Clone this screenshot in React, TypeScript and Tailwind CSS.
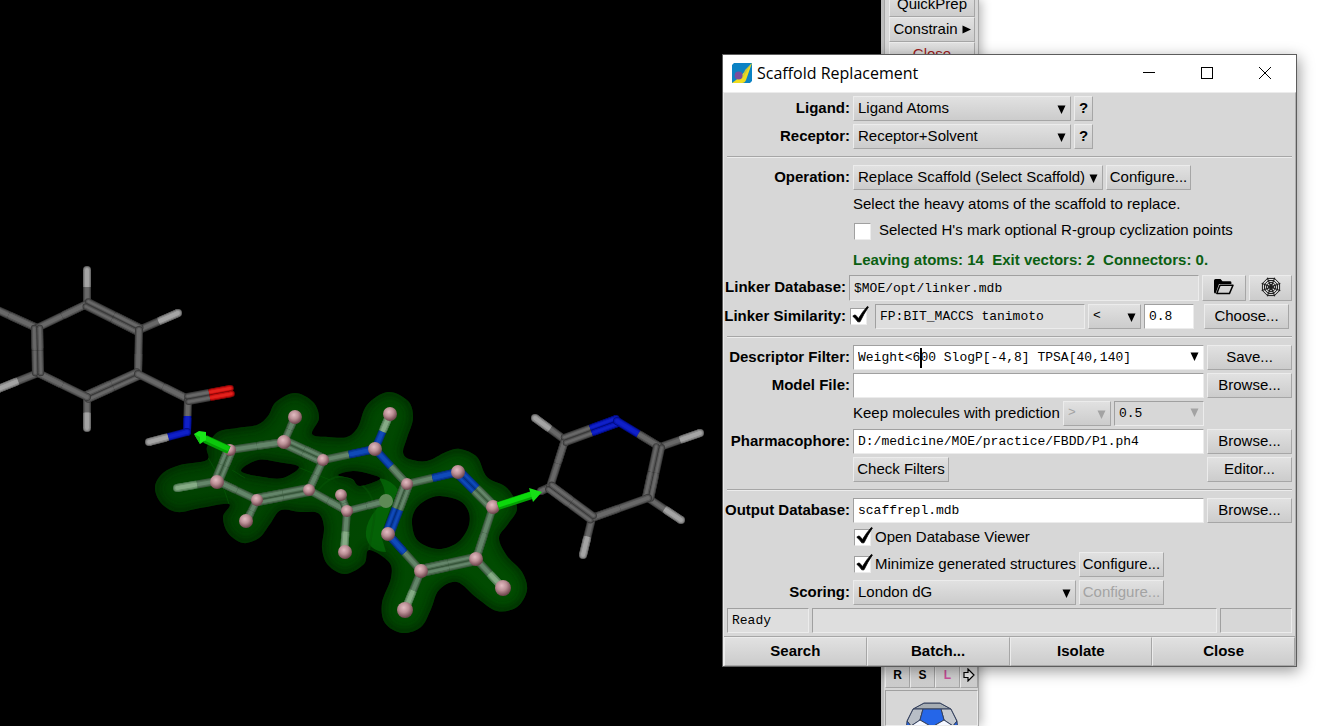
import React from "react";

type Pt = [number, number];

/* ---------- molecule scene ---------- */

type Tone = { edge: string; mid: string; shine: string };

const TONES: Record<string, Tone> = {
  C: { edge: "#3a3a3a", mid: "#545454", shine: "#686868" },
  H: { edge: "#666666", mid: "#8a8a8a", shine: "#a4a4a4" },
  N: { edge: "#030c84", mid: "#0818b4", shine: "#1020c8" },
  O: { edge: "#8a0808", mid: "#c81010", shine: "#e2221c" },
  c: { edge: "#36553a", mid: "#4d6c50", shine: "#64856a" },
  h: { edge: "#4c7650", mid: "#6b936c", shine: "#86ab86" },
  n: { edge: "#052e7c", mid: "#083ca0", shine: "#104ab8" },
};

type BondSpec = { a: Pt; b: Pt; ta: string; tb: string; double?: boolean };

function Bond({ a, b, ta, tb, double }: BondSpec) {
  const len = Math.hypot(b[0] - a[0], b[1] - a[1]);
  const nx = -(b[1] - a[1]) / len;
  const ny = (b[0] - a[0]) / len;
  const offsets = double ? [-2.8, 2.8] : [0];
  const width = double ? 6.5 : 8;
  const layers: [keyof Tone, number][] = [
    ["edge", width],
    ["mid", width - 1.8],
    ["shine", width - 4.2],
  ];
  return (
    <g>
      {offsets.map((o) => {
        const p: Pt = [a[0] + nx * o, a[1] + ny * o];
        const q: Pt = [b[0] + nx * o, b[1] + ny * o];
        const m: Pt = [(p[0] + q[0]) / 2, (p[1] + q[1]) / 2];
        const half = `M${m[0]} ${m[1]}L${q[0]} ${q[1]}`;
        const inset: Pt = [m[0] + ((q[0] - p[0]) / len) * 2, m[1] + ((q[1] - p[1]) / len) * 2];
        return (
          <g key={o} fill="none">
            {layers.map(([k, w]) => (
              <g key={k} stroke={TONES[ta][k]} strokeWidth={w}>
                <path d={`M${p[0]} ${p[1]}L${m[0]} ${m[1]}`} />
                <path d={`M${p[0]} ${p[1]}h0.01`} strokeLinecap="round" />
              </g>
            ))}
            {layers.map(([k, w]) => (
              <g key={k} stroke={TONES[tb][k]} strokeWidth={w}>
                <path d={half} />
                <path d={`M${inset[0]} ${inset[1]}L${q[0]} ${q[1]}`} />
                <path d={`M${q[0]} ${q[1]}h0.01`} strokeLinecap="round" />
              </g>
            ))}
          </g>
        );
      })}
    </g>
  );
}

const bond = (a: Pt, b: Pt, ta: string, tb: string, double = false): BondSpec => ({ a, b, ta, tb, double });

const OUTER_BONDS: BondSpec[] = [
  bond([-20, 302], [37, 328], "C", "C"),
  bond([38, 373], [-2, 389], "C", "H"),
  bond([87, 304], [87, 270], "C", "H"),
  bond([139, 330], [178, 313], "C", "H"),
  bond([87, 397], [87, 428], "C", "H"),
  bond([37, 328], [87, 304], "C", "C"),
  bond([87, 304], [139, 330], "C", "C", true),
  bond([139, 330], [138, 374], "C", "C"),
  bond([138, 374], [87, 397], "C", "C", true),
  bond([87, 397], [38, 373], "C", "C"),
  bond([38, 373], [37, 328], "C", "C", true),
  bond([138, 374], [188, 399], "C", "C"),
  bond([188, 400], [187, 432], "C", "N"),
  bond([188, 399], [231, 391], "C", "O", true),
  bond([187, 432], [149, 442], "N", "H"),
  bond([565, 440], [535, 418], "C", "H"),
  bond([660, 447], [700, 433], "C", "H"),
  bond([648, 498], [681, 520], "C", "H"),
  bond([592, 518], [583, 555], "C", "H"),
  bond([541, 491], [550, 487], "C", "C"),
  bond([550, 487], [565, 440], "C", "C"),
  bond([565, 440], [617, 421], "C", "N", true),
  bond([617, 421], [660, 447], "N", "C"),
  bond([659, 447], [648, 498], "C", "C", true),
  bond([648, 498], [592, 518], "C", "C"),
  bond([592, 518], [550, 487], "C", "C", true),
];

const SCAFFOLD_BONDS: BondSpec[] = [
  bond([217, 481], [177, 488], "c", "h"),
  bond([284, 442], [295, 417], "c", "c"),
  bond([257, 500], [246, 522], "c", "c"),
  bond([230, 450], [284, 442], "c", "c"),
  bond([284, 442], [323, 460], "c", "c", true),
  bond([323, 460], [309, 490], "c", "c"),
  bond([309, 490], [257, 500], "c", "c", true),
  bond([257, 500], [217, 481], "c", "c"),
  bond([217, 481], [230, 450], "c", "c", true),
  bond([309, 490], [347, 511], "c", "c"),
  bond([347, 511], [341, 495], "c", "c"),
  bond([347, 511], [386, 501], "c", "c"),
  bond([347, 511], [344, 552], "c", "h"),
  bond([323, 460], [375, 449], "c", "n"),
  bond([375, 449], [390, 414], "n", "h"),
  bond([375, 449], [407, 484], "n", "c"),
  bond([407, 484], [458, 472], "c", "n"),
  bond([458, 472], [493, 507], "n", "c", true),
  bond([493, 507], [476, 559], "c", "c"),
  bond([476, 559], [421, 571], "c", "c", true),
  bond([421, 571], [388, 534], "c", "n"),
  bond([388, 534], [407, 484], "n", "c", true),
  bond([476, 559], [503, 588], "c", "h"),
  bond([421, 571], [405, 610], "c", "h"),
];

const BALLS: [number, number, number][] = [
  [230, 450, 6], [284, 442, 7], [323, 460, 6], [309, 490, 6], [257, 500, 6], [217, 482, 7],
  [295, 417, 7], [246, 521, 7], [341, 495, 6], [347, 511, 6], [345, 552, 7],
  [375, 449, 7], [390, 414, 7], [407, 484, 6], [458, 472, 7], [493, 507, 7],
  [476, 559, 7], [421, 571, 7], [388, 534, 7], [503, 588, 8], [405, 610, 8],
];

const SURFACE: Pt[] = [
  [207, 447], [218, 432], [237, 428], [257, 425], [268, 416], [276, 402], [295, 393], [313, 402], [319, 418],
  [312, 434], [328, 437], [347, 437], [358, 427], [367, 405], [388, 392], [408, 401], [413, 418], [407, 438],
  [403, 452], [409, 459], [427, 461], [446, 452], [460, 449], [477, 457], [487, 477], [507, 488], [517, 508],
  [508, 524], [499, 538], [507, 556], [522, 572], [527, 590], [517, 607], [497, 611], [477, 598], [457, 582],
  [439, 590], [431, 609], [421, 627], [402, 633], [385, 623], [382, 603], [391, 578], [389, 562], [369, 550],
  [364, 564], [345, 574], [328, 565], [322, 548], [324, 527], [318, 513], [300, 512], [281, 510], [270, 524],
  [259, 538], [243, 543], [228, 533], [223, 517], [229, 504], [200, 508], [177, 512], [161, 503], [155, 487],
  [163, 473], [180, 465], [207, 460],
];

const HOLES: Pt[][] = [
  [[241, 471], [258, 460], [278, 462], [299, 467], [283, 478], [263, 477]],
  [[338, 475], [353, 471], [370, 474], [380, 479], [360, 486], [352, 479]],
  [[440, 496], [460, 501], [469, 513], [468, 528], [457, 543], [438, 549], [418, 541], [412, 524], [415, 510], [426, 500]],
];

function closedCurve(pts: Pt[]): string {
  const n = pts.length;
  let d = `M${pts[0][0]} ${pts[0][1]}`;
  for (let i = 0; i < n; i++) {
    const p0 = pts[(i + n - 1) % n];
    const p1 = pts[i];
    const p2 = pts[(i + 1) % n];
    const p3 = pts[(i + 2) % n];
    d += `C${p1[0] + (p2[0] - p0[0]) / 6} ${p1[1] + (p2[1] - p0[1]) / 6} ${p2[0] - (p3[0] - p1[0]) / 6} ${
      p2[1] - (p3[1] - p1[1]) / 6
    } ${p2[0]} ${p2[1]}`;
  }
  return d + "Z";
}

const SURFACE_PATH = [SURFACE, ...HOLES].map(closedCurve).join("");

function Scene() {
  return (
    <svg
      viewBox="0 0 881 726"
      preserveAspectRatio="xMinYMin slice"
      className="block h-full w-full"
      role="img"
      aria-label="Ligand structure"
    >
      <defs>
        <clipPath id="surface-clip">
          <path d={SURFACE_PATH} clipRule="evenodd" />
        </clipPath>
        <filter id="soft" x="-10%" y="-10%" width="120%" height="120%">
          <feGaussianBlur stdDeviation="4" />
        </filter>
        <linearGradient id="surface-fill" gradientUnits="userSpaceOnUse" x1="155" y1="0" x2="520" y2="0">
          <stop offset="0" stopColor="#014001" />
          <stop offset="1" stopColor="#014c01" />
        </linearGradient>
        <radialGradient id="ball" cx="42%" cy="35%" r="62%">
          <stop offset="0" stopColor="#e3bcc2" />
          <stop offset="0.5" stopColor="#bb9096" />
          <stop offset="1" stopColor="#70484f" />
        </radialGradient>
      </defs>

      {OUTER_BONDS.map((b, i) => (
        <Bond key={i} {...b} />
      ))}

      <path d={SURFACE_PATH} fillRule="evenodd" fill="url(#surface-fill)" />
      <g clipPath="url(#surface-clip)">
        <path d={SURFACE_PATH} fill="none" stroke="#002400" strokeWidth="8" opacity="0.75" filter="url(#soft)" />
        <path
          d="M379 478Q392 480 398 490Q389 510 381 535L386 552Q372 552 367 540Q362 526 378 507Q391 497 379 478Z"
          fill="#056d08"
          opacity="0.7"
        />
        <path d="M318 490Q337 467 359 483Q377 495 374 520L369 550" fill="none" stroke="#065406" strokeWidth="2" opacity="0.5" />
        <path d="M300 468L330 480M229 504Q222 480 207 456M245 478L232 470" stroke="#056005" strokeWidth="1" fill="none" opacity="0.5" />
      </g>

      {SCAFFOLD_BONDS.map((b, i) => (
        <Bond key={i} {...b} />
      ))}
      <circle cx="386" cy="501" r="7" fill="#5f8a56" />
      {BALLS.map(([x, y, r]) => (
        <circle key={`${x}-${y}`} cx={x} cy={y} r={r} fill="url(#ball)" />
      ))}

      <g>
        <line x1="229" y1="450" x2="205" y2="439" stroke="#04a004" strokeWidth="8" />
        <line x1="229" y1="449" x2="205" y2="438" stroke="#0cc80c" strokeWidth="5" />
        <polygon points="194,434 199,431 206,432 206,440 200,444" fill="#19e619" />
        <polygon points="194,434 200,437 200,444" fill="#12c412" />
        <line x1="498" y1="506" x2="532" y2="495" stroke="#04a004" strokeWidth="8" />
        <line x1="498" y1="505" x2="532" y2="494" stroke="#0cd80c" strokeWidth="5" />
        <polygon points="529,488 542,492 533,502" fill="#16e016" />
      </g>
    </svg>
  );
}

/* ---------- form parts ---------- */

const RAISED =
  "border border-t-[#ececec] border-l-[#ececec] border-r-[#a6a6a6] border-b-[#a6a6a6] bg-linear-to-b from-[#e1e1e1] to-[#cccccc]";
const SUNKEN = "border border-t-[#a0a0a0] border-l-[#a0a0a0] border-r-[#ececec] border-b-[#ececec]";
const MONO = "font-['Liberation_Mono',monospace] text-[13px]";

function Triangle({ className = "" }: { className?: string }) {
  return (
    <svg viewBox="0 0 9 9" className={`size-[9px] ${className}`} aria-hidden="true">
      <path d="M0.5 0.5H8.5L4.5 9Z" fill="currentColor" />
    </svg>
  );
}

function Push({
  children,
  className = "w-[85px]",
  disabled,
  label,
}: {
  children: React.ReactNode;
  className?: string;
  disabled?: boolean;
  label?: string;
}) {
  return (
    <button
      type="button"
      disabled={disabled}
      aria-label={label}
      className={`flex h-full shrink-0 items-center justify-center pb-0.5 whitespace-nowrap disabled:text-[#a3a3a3] ${RAISED} ${className}`}
    >
      {children}
    </button>
  );
}

function Choice({
  id,
  label,
  options,
  className,
  mono,
  disabled,
}: {
  id: string;
  label?: string;
  options: string[];
  className: string;
  mono?: boolean;
  disabled?: boolean;
}) {
  return (
    <div className={`relative h-full shrink-0 ${disabled ? "text-[#a3a3a3]" : ""} ${className}`}>
      <select
        id={id}
        aria-label={label}
        disabled={disabled}
        className={`block h-full w-full appearance-none pb-0.5 pl-1 opacity-100 outline-none ${RAISED} ${mono ? MONO : ""}`}
      >
        {options.map((o) => (
          <option key={o}>{o}</option>
        ))}
      </select>
      <Triangle className="pointer-events-none absolute top-[9px] right-[5px]" />
    </div>
  );
}

function Field({
  id,
  value,
  readOnly,
  className = "min-w-0 flex-1",
  label,
}: {
  id: string;
  value: string;
  readOnly?: boolean;
  className?: string;
  label?: string;
}) {
  return (
    <input
      id={id}
      aria-label={label}
      defaultValue={value}
      readOnly={readOnly}
      className={`h-full px-1 outline-none ${SUNKEN} ${MONO} ${readOnly ? "bg-[#dedede]" : "bg-white"} ${className}`}
    />
  );
}

function Tick({ id, checked, label }: { id: string; checked?: boolean; label?: string }) {
  return (
    <span className="relative mx-px block size-[17px] shrink-0">
      <input
        id={id}
        type="checkbox"
        aria-label={label}
        defaultChecked={checked}
        className={`peer block size-full appearance-none bg-white ${SUNKEN}`}
      />
      <svg
        viewBox="0 0 20 20"
        className="pointer-events-none absolute bottom-0 left-0 hidden size-5 peer-checked:block"
        aria-hidden="true"
      >
        <path
          d="M2.8 11.2Q4.6 9.4 6 10.4L8.4 13.6Q12.5 6.6 17.4 1.4L18.4 2Q13.6 9 10 16.8H7.8Q5.6 13.4 2.8 11.2Z"
          fill="#000"
          stroke="#000"
          strokeWidth="0.8"
          strokeLinejoin="round"
        />
      </svg>
    </span>
  );
}

function Row({
  label,
  htmlFor,
  children,
  height = "h-[25px]",
  labelWidth = "w-[123px]",
}: {
  label?: string;
  htmlFor?: string;
  children: React.ReactNode;
  height?: string;
  labelWidth?: string;
}) {
  return (
    <div className={`flex items-center gap-[3px] ${height}`}>
      {label ? (
        <label htmlFor={htmlFor} className={`flex shrink-0 justify-end pb-0.5 font-bold whitespace-nowrap ${labelWidth}`}>
          {label}
        </label>
      ) : (
        <span className={`shrink-0 ${labelWidth}`} />
      )}
      {children}
    </div>
  );
}

function Rule() {
  return <hr className="my-1 h-0.5 border-0 border-t border-b border-t-[#a6a6a6] border-b-[#ececec]" />;
}

function FolderIcon() {
  return (
    <svg viewBox="0 0 20 16" className="h-4 w-5" aria-hidden="true">
      <path d="M0 1.5Q0 0 1.5 0H6.5L8.5 2.2H16Q17.4 2.2 17.4 3.6V5H5L1.6 14.5Q0 14.5 0 13Z" fill="#000" />
      <path d="M6 6.2H19L15.4 14.6H2.8Z" fill="none" stroke="#000" strokeWidth="1.5" strokeLinejoin="round" />
    </svg>
  );
}

function WebIcon() {
  const angles = Array.from({ length: 8 }, (_, i) => ((i + 0.5) * Math.PI) / 4);
  const ring = (r: number) => angles.map((a) => `${10 + r * Math.cos(a)},${10 + r * Math.sin(a)}`).join(" ");
  return (
    <svg viewBox="0 0 20 20" className="size-5" fill="none" stroke="#1c1c1c" aria-hidden="true">
      {[9.3, 7, 4.8, 2.6].map((r) => (
        <polygon key={r} points={ring(r)} strokeWidth="1" />
      ))}
      {angles.map((a) => (
        <line key={a} x1="10" y1="10" x2={10 + 10 * Math.cos(a)} y2={10 + 10 * Math.sin(a)} strokeWidth="1.1" />
      ))}
    </svg>
  );
}

function AppIcon() {
  return (
    <svg viewBox="0 0 20 20" className="size-5" aria-hidden="true">
      <path d="M2 0H20V18L18 20H0V2Z" fill="#0b82c4" />
      <path d="M20 0L14 17Q13 20 10 20H0L8 14Z" fill="#f0dc1e" />
      <path d="M20 0L13 7L10 16Z" fill="#c8c83c" />
      <circle cx="6.6" cy="12.6" r="4" fill="#7a4d9c" />
    </svg>
  );
}

function TitleBar() {
  return (
    <header className="flex h-[37px] items-center bg-white pr-0.5 pb-0.5 pl-[9px]">
      <AppIcon />
      <h1 className="ml-[5px] flex-1 font-['Open_Sans','Noto_Sans',sans-serif] text-base">Scaffold Replacement</h1>
      <button type="button" aria-label="Minimize" className="flex h-full w-[58px] items-center justify-center">
        <svg viewBox="0 0 12 12" className="size-3" shapeRendering="crispEdges">
          <path d="M0 5.5H12" stroke="#000" />
        </svg>
      </button>
      <button type="button" aria-label="Maximize" className="flex h-full w-[58px] items-center justify-center">
        <svg viewBox="0 0 12 12" className="size-3" shapeRendering="crispEdges">
          <path d="M0.5 0.5H11.5V11.5H0.5Z" stroke="#000" fill="none" />
        </svg>
      </button>
      <button type="button" aria-label="Close window" className="flex h-full w-[58px] items-center justify-center">
        <svg viewBox="0 0 12 12" className="size-3">
          <path d="M0 0L12 12M12 0L0 12" stroke="#000" />
        </svg>
      </button>
    </header>
  );
}

function ScaffoldDialog() {
  return (
    <section className="absolute top-[54px] right-[27px] w-[575px] border border-[#5c5c5c] bg-[#d7d7d7] text-[15px] leading-5 text-black shadow-[2px_4px_14px_rgba(0,0,0,0.4)]">
      <TitleBar />
      <form className="border border-t-[#ececec] border-r-[#b0b0b0] border-b-0 border-l-[#ececec]">
        <div className="flex flex-col gap-[3px] p-[3px]">
          <Row label="Ligand:" htmlFor="ligand">
            <Choice id="ligand" options={["Ligand Atoms"]} className="w-[218px]" />
            <Push className="w-[19px] font-bold" label="About ligand">?</Push>
          </Row>
          <Row label="Receptor:" htmlFor="receptor">
            <Choice id="receptor" options={["Receptor+Solvent"]} className="w-[218px]" />
            <Push className="w-[19px] font-bold" label="About receptor">?</Push>
          </Row>
          <Rule />
          <Row label="Operation:" htmlFor="operation">
            <Choice id="operation" options={["Replace Scaffold (Select Scaffold)"]} className="w-[250px]" />
            <Push>Configure...</Push>
          </Row>
          <Row height="h-[22px]">
            <p>Select the heavy atoms of the scaffold to replace.</p>
          </Row>
          <Row height="h-[26px]">
            <Tick id="cyclize" />
            <label htmlFor="cyclize" className="ml-1 pb-0.5">
              Selected H's mark optional R-group cyclization points
            </label>
          </Row>
          <Row>
            <p className="font-bold whitespace-pre text-[#0b5f12]">
              {"Leaving atoms: 14  Exit vectors: 2  Connectors: 0."}
            </p>
          </Row>
          <Row label="Linker Database:" htmlFor="linker-db" height="h-[26px]" labelWidth="w-[119px]">
            <Field id="linker-db" value="$MOE/opt/linker.mdb" readOnly />
            <Push className="w-[44px]" label="Open file">
              <FolderIcon />
            </Push>
            <Push className="w-[43px]" label="Web search">
              <WebIcon />
            </Push>
          </Row>
          <Row label="Linker Similarity:" htmlFor="similarity" labelWidth="w-[119px]">
            <Tick id="similarity" checked />
            <Field id="fingerprint" label="Fingerprint" value="FP:BIT_MACCS tanimoto" readOnly className="ml-1 min-w-0 flex-1" />
            <Choice id="comparison" label="Comparison" options={["<"]} className="w-[53px]" mono />
            <Field id="threshold" label="Threshold" value="0.8" className="w-[50px]" />
            <Push className="mr-[3px] ml-[7px] w-[85px]">Choose...</Push>
          </Row>
          <Rule />
          <Row label="Descriptor Filter:" htmlFor="filter">
            <div className={`relative h-full min-w-0 flex-1 ${MONO}`}>
              <input
                id="filter"
                defaultValue="Weight<600 SlogP[-4,8] TPSA[40,140]"
                className={`block h-full w-full bg-white px-1 outline-none ${SUNKEN}`}
              />
              <span className="absolute top-[3px] left-[calc(5px+8ch)] h-5 w-0.5 bg-black" />
              <Triangle className="pointer-events-none absolute top-[7px] right-[5px]" />
            </div>
            <Push>Save...</Push>
          </Row>
          <Row label="Model File:" htmlFor="model">
            <Field id="model" value="" />
            <Push>Browse...</Push>
          </Row>
          <Row>
            <p className="flex-1 pb-0.5 whitespace-nowrap">Keep molecules with prediction</p>
            <Choice id="prediction" label="Prediction comparison" options={[">"]} className="w-12" mono disabled />
            <div className="relative mr-[88px] h-full w-[90px] shrink-0">
              <input
                aria-label="Prediction threshold"
                defaultValue="0.5"
                readOnly
                className={`block h-full w-full px-1 outline-none ${SUNKEN} ${MONO}`}
              />
              <Triangle className="pointer-events-none absolute top-[7px] right-[5px] text-[#a3a3a3]" />
            </div>
          </Row>
          <Row label="Pharmacophore:" htmlFor="pharmacophore">
            <Field id="pharmacophore" value="D:/medicine/MOE/practice/FBDD/P1.ph4" />
            <Push>Browse...</Push>
          </Row>
          <Row>
            <Push className="mr-auto w-[96px]">Check Filters</Push>
            <Push>Editor...</Push>
          </Row>
          <Rule />
          <Row label="Output Database:" htmlFor="output">
            <Field id="output" value="scaffrepl.mdb" />
            <Push>Browse...</Push>
          </Row>
          <Row height="h-[23px]">
            <Tick id="viewer" checked />
            <label htmlFor="viewer" className="pb-0.5">
              Open Database Viewer
            </label>
          </Row>
          <Row>
            <Tick id="minimize" checked />
            <label htmlFor="minimize" className="pb-0.5">
              Minimize generated structures
            </label>
            <Push>Configure...</Push>
          </Row>
          <Row label="Scoring:" htmlFor="scoring">
            <Choice id="scoring" options={["London dG"]} className="w-[223px]" />
            <Push disabled>Configure...</Push>
          </Row>
          <div className="flex h-[25px] gap-[3px]">
            <output className={`flex w-[82px] items-center bg-[#dedede] px-1 ${SUNKEN} ${MONO}`}>Ready</output>
            <div className={`flex-1 bg-[#dedede] ${SUNKEN}`} />
            <div className={`w-[72px] ${SUNKEN}`} />
          </div>
        </div>
        <div className="grid h-[30px] grid-cols-4 border-t border-t-[#a6a6a6] font-bold">
          {["Search", "Batch...", "Isolate", "Close"].map((name) => (
            <Push key={name} className="w-full">
              {name}
            </Push>
          ))}
        </div>
      </form>
    </section>
  );
}

/* ---------- side toolbar ---------- */

function SoccerBall() {
  return (
    <svg viewBox="0 0 54 54" className="block size-[54px] shrink-0" role="img" aria-label="Builder">
      <defs>
        <clipPath id="ball-clip">
          <path d="M19 1H35L46 7L52 19L53 30L45 46L27 53L9 46L1 30L2 19L8 7Z" />
        </clipPath>
      </defs>
      <g clipPath="url(#ball-clip)" stroke="#34405c" strokeWidth="1">
        <rect width="54" height="54" fill="#fff" />
        <path d="M8 7L19 1H35L46 7L36 7L18 7Z" fill="#a6adb3" />
        <path d="M8 7L18 7L15 18L6 24L2 19Z" fill="#b8bec6" />
        <path d="M46 7L36 7L39 18L48 24L52 19Z" fill="#c6cad0" />
        <path d="M18 7H36L39 18L27 25L15 18Z" fill="#2566e8" />
        <path d="M0 12L6 9L2 19L6 24L3 36L0 36Z" fill="#2566e8" />
        <path d="M54 12L48 9L52 19L48 24L51 36L54 36Z" fill="#2566e8" />
        <path d="M6 24L15 18L27 25V34L18 40L8 36Z" fill="#f4f7ff" />
        <path d="M48 24L39 18L27 25V34L36 40L46 36Z" fill="#f4f7ff" />
      </g>
      <path d="M19 1H35L46 7L52 19L53 30L45 46L27 53L9 46L1 30L2 19L8 7Z" fill="none" stroke="#34405c" strokeWidth="1" />
    </svg>
  );
}

function SideBar() {
  const item = `flex h-[25px] items-center justify-center whitespace-nowrap ${RAISED}`;
  return (
    <aside className="flex min-h-0 flex-col justify-between overflow-hidden border-r border-l-[3px] border-r-[#a6a6a6] border-l-[#bdbdbd] bg-[#d7d7d7] text-[15px] shadow-[2px_0_10px_rgba(0,0,0,0.3)]">
      <nav className="-mt-2 flex flex-col border-l border-l-[#a6a6a6] pr-[3px] pl-1">
        <button type="button" className={item}>QuickPrep</button>
        <button type="button" className={`gap-1 ${item}`}>
          Constrain
          <Triangle className="-rotate-90" />
        </button>
        <button type="button" className={`text-[#9c1c1c] ${item}`}>Close</button>
      </nav>
      <div className="pl-px">
        <div className="grid h-6 grid-cols-[repeat(3,25px)_1fr] text-xs font-bold">
          <Push className="w-full">R</Push>
          <Push className="w-full">S</Push>
          <Push className="w-full text-[#d050a0]">L</Push>
          <Push className="w-full" label="Next">
            <svg viewBox="0 0 12 14" className="h-3.5 w-3" aria-hidden="true">
              <path d="M1 4.5H5V1L11 7L5 13V9.5H1Z" fill="#eee" stroke="#000" strokeWidth="1.2" />
            </svg>
          </Push>
        </div>
        <div className={`mt-0.5 flex h-9 items-start justify-center overflow-hidden pt-[11px] ${SUNKEN}`}>
          <SoccerBall />
        </div>
      </div>
    </aside>
  );
}

export default function App() {
  return (
    <main className="relative grid h-screen grid-cols-[minmax(0,1fr)_98px_345px] overflow-hidden bg-white font-['Liberation_Sans',Arial,sans-serif]">
      <div className="min-h-0 overflow-hidden bg-black">
        <Scene />
      </div>
      <SideBar />
      <div />
      <ScaffoldDialog />
    </main>
  );
}
